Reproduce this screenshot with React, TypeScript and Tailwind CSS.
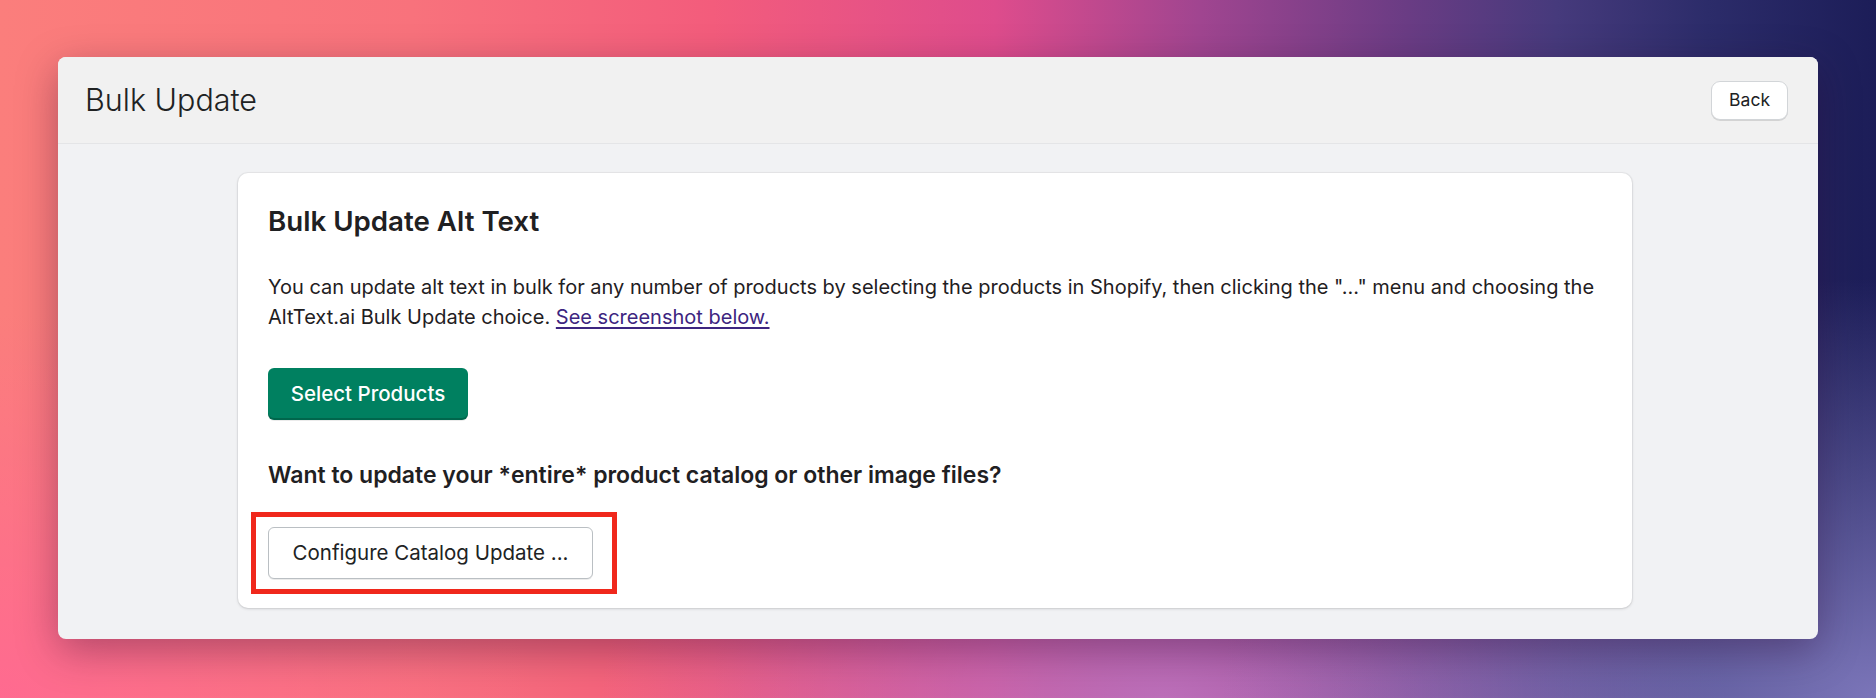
const font = "font-['Inter','Liberation_Sans',sans-serif]";

function HeaderBar() {
  return (
    <div className="flex h-[87px] items-center justify-between border-b border-[#e4e5e7] bg-[#f1f1f1] pl-[27px] pr-[30px]">
      <h1 className="text-[30.5px] font-light leading-none text-[#202223]">
        Bulk Update
      </h1>
      <button className="h-[39px] rounded-[9px] border border-[#d2d5d8] bg-white px-[17px] text-[17.5px] text-[#202223] shadow-[0_1px_0_rgba(0,0,0,0.12)]">
        Back
      </button>
    </div>
  );
}

function BulkCard() {
  return (
    <div className="rounded-[10px] bg-white px-[30px] pb-[14px] pt-[32px] text-[#1f2022] shadow-[0_0_0_1px_rgba(63,63,68,0.05),0_1px_3px_rgba(63,63,68,0.18)]">
      <h2 className="text-[27.7px] font-semibold leading-[32px]">
        Bulk Update Alt Text
      </h2>
      <p className="mt-[35px] text-[20px] leading-[30px]">
        You can update alt text in bulk for any number of products by selecting the products in Shopify, then clicking the "..." menu and choosing the
        <br />
        AltText.ai Bulk Update choice.{" "}
        <a href="#" className="text-[#3d2580] underline underline-offset-[3px]">
          See screenshot below.
        </a>
      </p>
      <button className="mt-[36px] flex h-[52px] w-[200px] items-center justify-center rounded-[6px] bg-[#008060] text-[20.5px] font-medium text-white shadow-[inset_0_-2px_0_rgba(0,0,0,0.2),0_1px_0_rgba(0,0,0,0.08)]">
        Select Products
      </button>
      <h3 className="mt-[41px] text-[23px] font-semibold leading-[28px]">
        Want to update your *entire* product catalog or other image files?
      </h3>
      {/* red annotation frame around the catalog button */}
      <div className="-ml-[17px] mt-[23px] inline-flex border-[5px] border-[#f0281c] py-[10px] pl-[12px] pr-[19px]">
        <button className="flex h-[52px] w-[325px] items-center justify-center rounded-[6px] border border-[#babfc3] bg-white text-[20.5px] text-[#202223] shadow-[0_1px_0_rgba(0,0,0,0.08)]">
          Configure Catalog Update ...
        </button>
      </div>
    </div>
  );
}

export default function App() {
  return (
    <div
      className={`${font} h-[698px] w-[1876px] overflow-hidden px-[58px] pt-[57px] [background-image:radial-gradient(ellipse_35%_60%_at_100%_100%,rgba(128,122,190,0.95),rgba(128,122,190,0)_100%),radial-gradient(ellipse_30%_45%_at_62%_100%,rgba(190,115,190,0.9),rgba(190,115,190,0)_100%),radial-gradient(ellipse_30%_55%_at_0%_100%,rgba(255,105,145,0.95),rgba(255,105,145,0)_100%),linear-gradient(to_right,#fb7e7c_0%,#f8727c_22%,#f35c7c_38%,#de4c8c_53%,#a04590_64%,#6a3c84_75%,#463a7c_83%,#2c2c6a_91%,#1c1d58_100%)]`}
    >
      <div className="h-[582px] overflow-hidden rounded-[8px] bg-[#f1f2f4] shadow-[0_12px_40px_rgba(40,0,40,0.35)]">
        <HeaderBar />
        <div className="pl-[180px] pr-[186px] pt-[29px]">
          <BulkCard />
        </div>
      </div>
    </div>
  );
}
